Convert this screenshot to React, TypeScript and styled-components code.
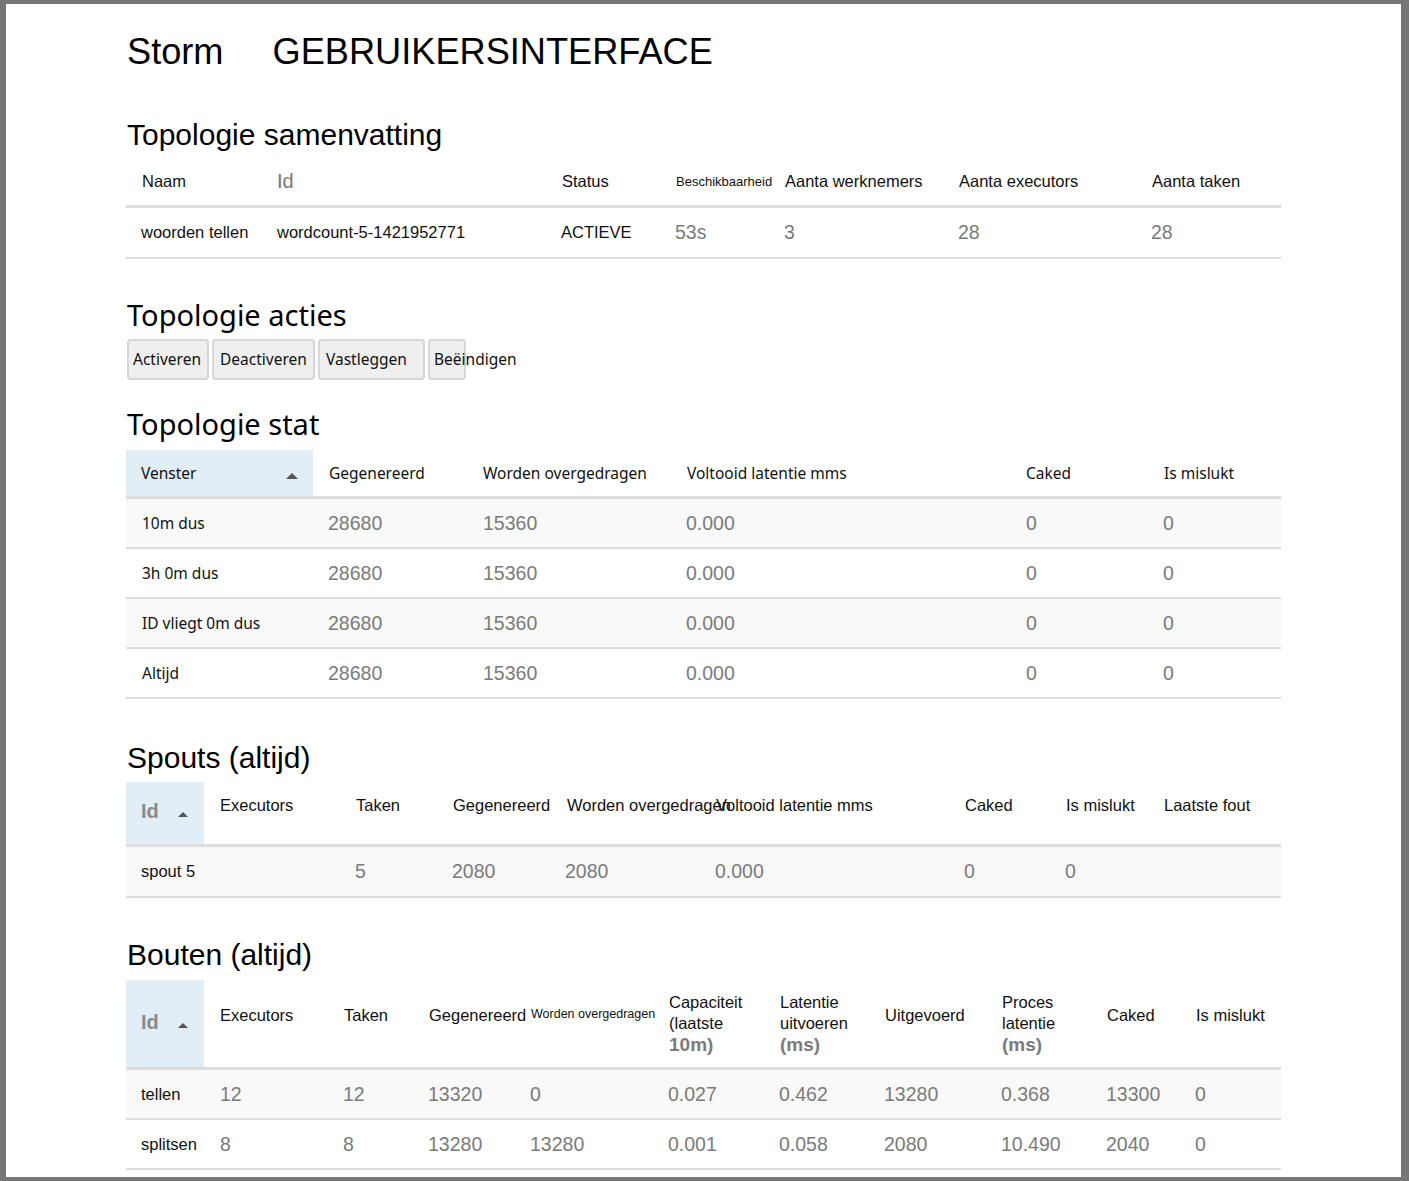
import React from 'react';
import styled, { createGlobalStyle, css } from 'styled-components';

type Kind = 'label' | 'num' | 'seg' | 'muted' | 'mini' | 'micro';

const GlobalStyle = createGlobalStyle`
  html, body {
    margin: 0;
    padding: 0;
    background: #767676;
  }
  body {
    font-family: "Liberation Sans", Arial, sans-serif;
    color: #000;
  }
`;

const kindStyles: Record<Kind, ReturnType<typeof css>> = {
  label: css`
    font: 400 16.5px "Liberation Sans", Arial, sans-serif;
    color: #111;
  `,
  num: css`
    font: 400 19.5px "Liberation Sans", Arial, sans-serif;
    color: #7b7b7b;
  `,
  seg: css`
    font: 400 15.5px "Noto Sans", "Open Sans", sans-serif;
    color: #111;
  `,
  muted: css`
    font: 400 20px "Liberation Sans", Arial, sans-serif;
    color: #777;
  `,
  mini: css`
    font: 400 13px "Liberation Sans", Arial, sans-serif;
    color: #111;
  `,
  micro: css`
    font: 400 12.5px "Liberation Sans", Arial, sans-serif;
    color: #111;
  `,
};

const Frame = styled.div`
  margin: 4px 8px 0 6px;
  height: 1173px;
  box-sizing: border-box;
  padding: 28px 0 0 120px;
  background: #fff;
  overflow: hidden;
`;

const Content = styled.main`
  width: 1155px;
`;

const Title = styled.h1`
  display: flex;
  gap: 49px;
  margin: 0 0 0 1px;
  font: 400 36.2px/40px "Liberation Sans", Arial, sans-serif;
  color: #000;
`;

const SectionTitle = styled.h2<{ $face: 'arial' | 'segoe'; $mt: number }>`
  margin: ${p => p.$mt}px 0 0 1px;
  font-weight: 400;
  line-height: 34px;
  color: #000;
  ${p =>
    p.$face === 'arial'
      ? css`
          font-family: "Liberation Sans", Arial, sans-serif;
          font-size: 30px;
        `
      : css`
          font-family: "Noto Sans", "Open Sans", sans-serif;
          font-size: 29px;
        `}
`;

const Grid = styled.div<{ $mt: number }>`
  margin-top: ${p => p.$mt}px;
  width: 1155px;
`;

const Row = styled.div<{ $cols: string; $h: number; $striped?: boolean; $head?: boolean }>`
  display: grid;
  grid-template-columns: ${p => p.$cols};
  height: ${p => p.$h}px;
  box-sizing: border-box;
  border-bottom: ${p => (p.$head ? 3 : 2)}px solid #dddddd;
  background: ${p => (p.$striped ? '#f9f9f9' : 'transparent')};
`;

const Cell = styled.div<{ $kind?: Kind; $pad?: number; $lift?: number }>`
  display: flex;
  align-items: center;
  min-width: 0;
  padding: 0 4px ${p => p.$lift ?? 0}px ${p => p.$pad ?? 15}px;
  white-space: nowrap;
  ${p => kindStyles[p.$kind ?? 'label']}
`;

const SortCell = styled(Cell)<{ $right: number }>`
  justify-content: space-between;
  padding-right: ${p => p.$right}px;
  background: #e1edf7;
`;

const SortId = styled.span`
  font: 700 20px "Liberation Sans", Arial, sans-serif;
  color: #8a8a8a;
`;

const SortArrow = styled.span<{ $size: number; $drop: number }>`
  width: 0;
  height: 0;
  margin-top: ${p => p.$drop}px;
  border-left: ${p => p.$size}px solid transparent;
  border-right: ${p => p.$size}px solid transparent;
  border-bottom: ${p => p.$size}px solid #555;
`;

const HeadStack = styled.div`
  white-space: normal;
  line-height: 21px;
`;

const Unit = styled.span`
  display: block;
  font: 700 19px "Liberation Sans", Arial, sans-serif;
  color: #7b7b7b;
`;

const ButtonBar = styled.div`
  display: flex;
  gap: 3px;
  margin: 7px 0 0 1px;
`;

const ActionButton = styled.button<{ $w: number; $pad: number }>`
  display: inline-flex;
  align-items: center;
  justify-content: flex-start;
  width: ${p => p.$w}px;
  height: 41px;
  box-sizing: border-box;
  padding: 0 0 1px ${p => p.$pad}px;
  border: 2px solid #d6d6d6;
  border-radius: 4px;
  background: #efefef;
  font: 400 15.5px "Noto Sans", "Open Sans", sans-serif;
  color: #111;
  white-space: nowrap;
  overflow: visible;
`;

type Col = { text?: React.ReactNode; kind?: Kind; pad?: number; lift?: number };

const summaryCols = '136px 285px 114px 109px 174px 193px 144px';
const statCols = '187px 155px 204px 339px 138px 132px';
const spoutCols = '78px 137px 97px 114px 149px 249px 101px 98px 132px';
const boltCols = '78px 125px 85px 102px 138px 111px 105px 117px 105px 89px 100px';

const summaryHead: Col[] = [
  { text: 'Naam', pad: 16 },
  { text: 'Id', kind: 'muted' },
  { text: 'Status' },
  { text: 'Beschikbaarheid', kind: 'mini' },
  { text: 'Aanta werknemers' },
  { text: 'Aanta executors' },
  { text: 'Aanta taken' },
];

const summaryRow: Col[] = [
  { text: 'woorden tellen', pad: 15 },
  { text: 'wordcount-5-1421952771' },
  { text: 'ACTIEVE', pad: 14 },
  { text: '53s', kind: 'num', pad: 14 },
  { text: '3', kind: 'num', pad: 14 },
  { text: '28', kind: 'num', pad: 14 },
  { text: '28', kind: 'num', pad: 14 },
];

const statHead: Col[] = [
  { text: 'Gegenereerd', kind: 'seg', pad: 16 },
  { text: 'Worden overgedragen', kind: 'seg' },
  { text: 'Voltooid latentie mms', kind: 'seg' },
  { text: 'Caked', kind: 'seg' },
  { text: 'Is mislukt', kind: 'seg' },
];

const statRows = ['10m dus', '3h 0m dus', 'ID vliegt 0m dus', 'Altijd'];

const spoutHead: Col[] = [
  { text: 'Executors', pad: 16, lift: 15 },
  { text: 'Taken', lift: 15 },
  { text: 'Gegenereerd', lift: 15 },
  { text: 'Worden overgedragen', lift: 15 },
  { text: 'Voltooid latentie mms', lift: 15 },
  { text: 'Caked', lift: 15 },
  { text: 'Is mislukt', lift: 15 },
  { text: 'Laatste fout', lift: 15 },
];

const spoutRow: Col[] = [
  { text: 'spout 5' },
  { text: '' },
  { text: '5', kind: 'num', pad: 14 },
  { text: '2080', kind: 'num', pad: 14 },
  { text: '2080', kind: 'num', pad: 13 },
  { text: '0.000', kind: 'num', pad: 14 },
  { text: '0', kind: 'num', pad: 14 },
  { text: '0', kind: 'num', pad: 14 },
  { text: '' },
];

const multi = (lines: string, unit: string) => (
  <HeadStack>
    {lines}
    <Unit>{unit}</Unit>
  </HeadStack>
);

const boltHead: Col[] = [
  { text: 'Executors', pad: 16, lift: 17 },
  { text: 'Taken', lift: 17 },
  { text: 'Gegenereerd', lift: 17 },
  { text: 'Worden overgedragen', kind: 'micro', lift: 19 },
  { text: multi('Capaciteit (laatste', '10m)') },
  { text: multi('Latentie uitvoeren', '(ms)') },
  { text: 'Uitgevoerd', lift: 17 },
  { text: multi('Proces latentie', '(ms)') },
  { text: 'Caked', lift: 17 },
  { text: 'Is mislukt', lift: 17 },
];

const boltRows: string[][] = [
  ['tellen', '12', '12', '13320', '0', '0.027', '0.462', '13280', '0.368', '13300', '0'],
  ['splitsen', '8', '8', '13280', '13280', '0.001', '0.058', '2080', '10.490', '2040', '0'],
];

const actions = [
  { label: 'Activeren', w: 82, pad: 4 },
  { label: 'Deactiveren', w: 103, pad: 6 },
  { label: 'Vastleggen', w: 107, pad: 6 },
  { label: 'Beëindigen', w: 38, pad: 4 },
];

const renderCells = (cols: Col[]) =>
  cols.map((c, i) => (
    <Cell key={i} $kind={c.kind} $pad={c.pad} $lift={c.lift}>
      {c.text}
    </Cell>
  ));

export default function App() {
  return (
    <>
      <GlobalStyle />
      <Frame>
        <Content>
          <Title>
            <span>Storm</span>
            <span>GEBRUIKERSINTERFACE</span>
          </Title>

          <SectionTitle $face="arial" $mt={46}>Topologie samenvatting</SectionTitle>
          <Grid $mt={9}>
            <Row $cols={summaryCols} $h={47} $head>
              {summaryHead.map((c, i) => (
                <Cell key={i} $kind={c.kind} $pad={c.pad} $lift={4}>
                  {c.text}
                </Cell>
              ))}
            </Row>
            <Row $cols={summaryCols} $h={51}>
              {renderCells(summaryRow)}
            </Row>
          </Grid>

          <SectionTitle $face="segoe" $mt={39}>Topologie acties</SectionTitle>
          <ButtonBar>
            {actions.map(a => (
              <ActionButton key={a.label} $w={a.w} $pad={a.pad}>
                {a.label}
              </ActionButton>
            ))}
          </ButtonBar>

          <SectionTitle $face="segoe" $mt={27}>Topologie stat</SectionTitle>
          <Grid $mt={9}>
            <Row $cols={statCols} $h={49} $head>
              <SortCell $kind="seg" $right={15}>
                Venster
                <SortArrow $size={6} $drop={5} />
              </SortCell>
              {renderCells(statHead)}
            </Row>
            {statRows.map((label, r) => (
              <Row key={label} $cols={statCols} $h={50} $striped={r % 2 === 0}>
                <Cell $kind="seg" $pad={16}>{label}</Cell>
                <Cell $kind="num" $pad={15}>28680</Cell>
                <Cell $kind="num" $pad={15}>15360</Cell>
                <Cell $kind="num" $pad={14}>0.000</Cell>
                <Cell $kind="num" $pad={15}>0</Cell>
                <Cell $kind="num" $pad={14}>0</Cell>
              </Row>
            ))}
          </Grid>

          <SectionTitle $face="arial" $mt={42}>Spouts (altijd)</SectionTitle>
          <Grid $mt={7}>
            <Row $cols={spoutCols} $h={65} $head>
              <SortCell $right={16} $lift={4}>
                <SortId>Id</SortId>
                <SortArrow $size={5} $drop={7} />
              </SortCell>
              {renderCells(spoutHead)}
            </Row>
            <Row $cols={spoutCols} $h={51} $striped>
              {renderCells(spoutRow)}
            </Row>
          </Grid>

          <SectionTitle $face="arial" $mt={40}>Bouten (altijd)</SectionTitle>
          <Grid $mt={8}>
            <Row $cols={boltCols} $h={90} $head>
              <SortCell $right={16} $lift={3}>
                <SortId>Id</SortId>
                <SortArrow $size={5} $drop={7} />
              </SortCell>
              {renderCells(boltHead)}
            </Row>
            {boltRows.map((row, r) => (
              <Row key={row[0]} $cols={boltCols} $h={50} $striped={r % 2 === 0}>
                {row.map((v, i) => (
                  <Cell key={i} $kind={i === 0 ? 'label' : 'num'} $pad={i === 0 ? 15 : i === 1 ? 16 : 14}>
                    {v}
                  </Cell>
                ))}
              </Row>
            ))}
          </Grid>
        </Content>
      </Frame>
    </>
  );
}
